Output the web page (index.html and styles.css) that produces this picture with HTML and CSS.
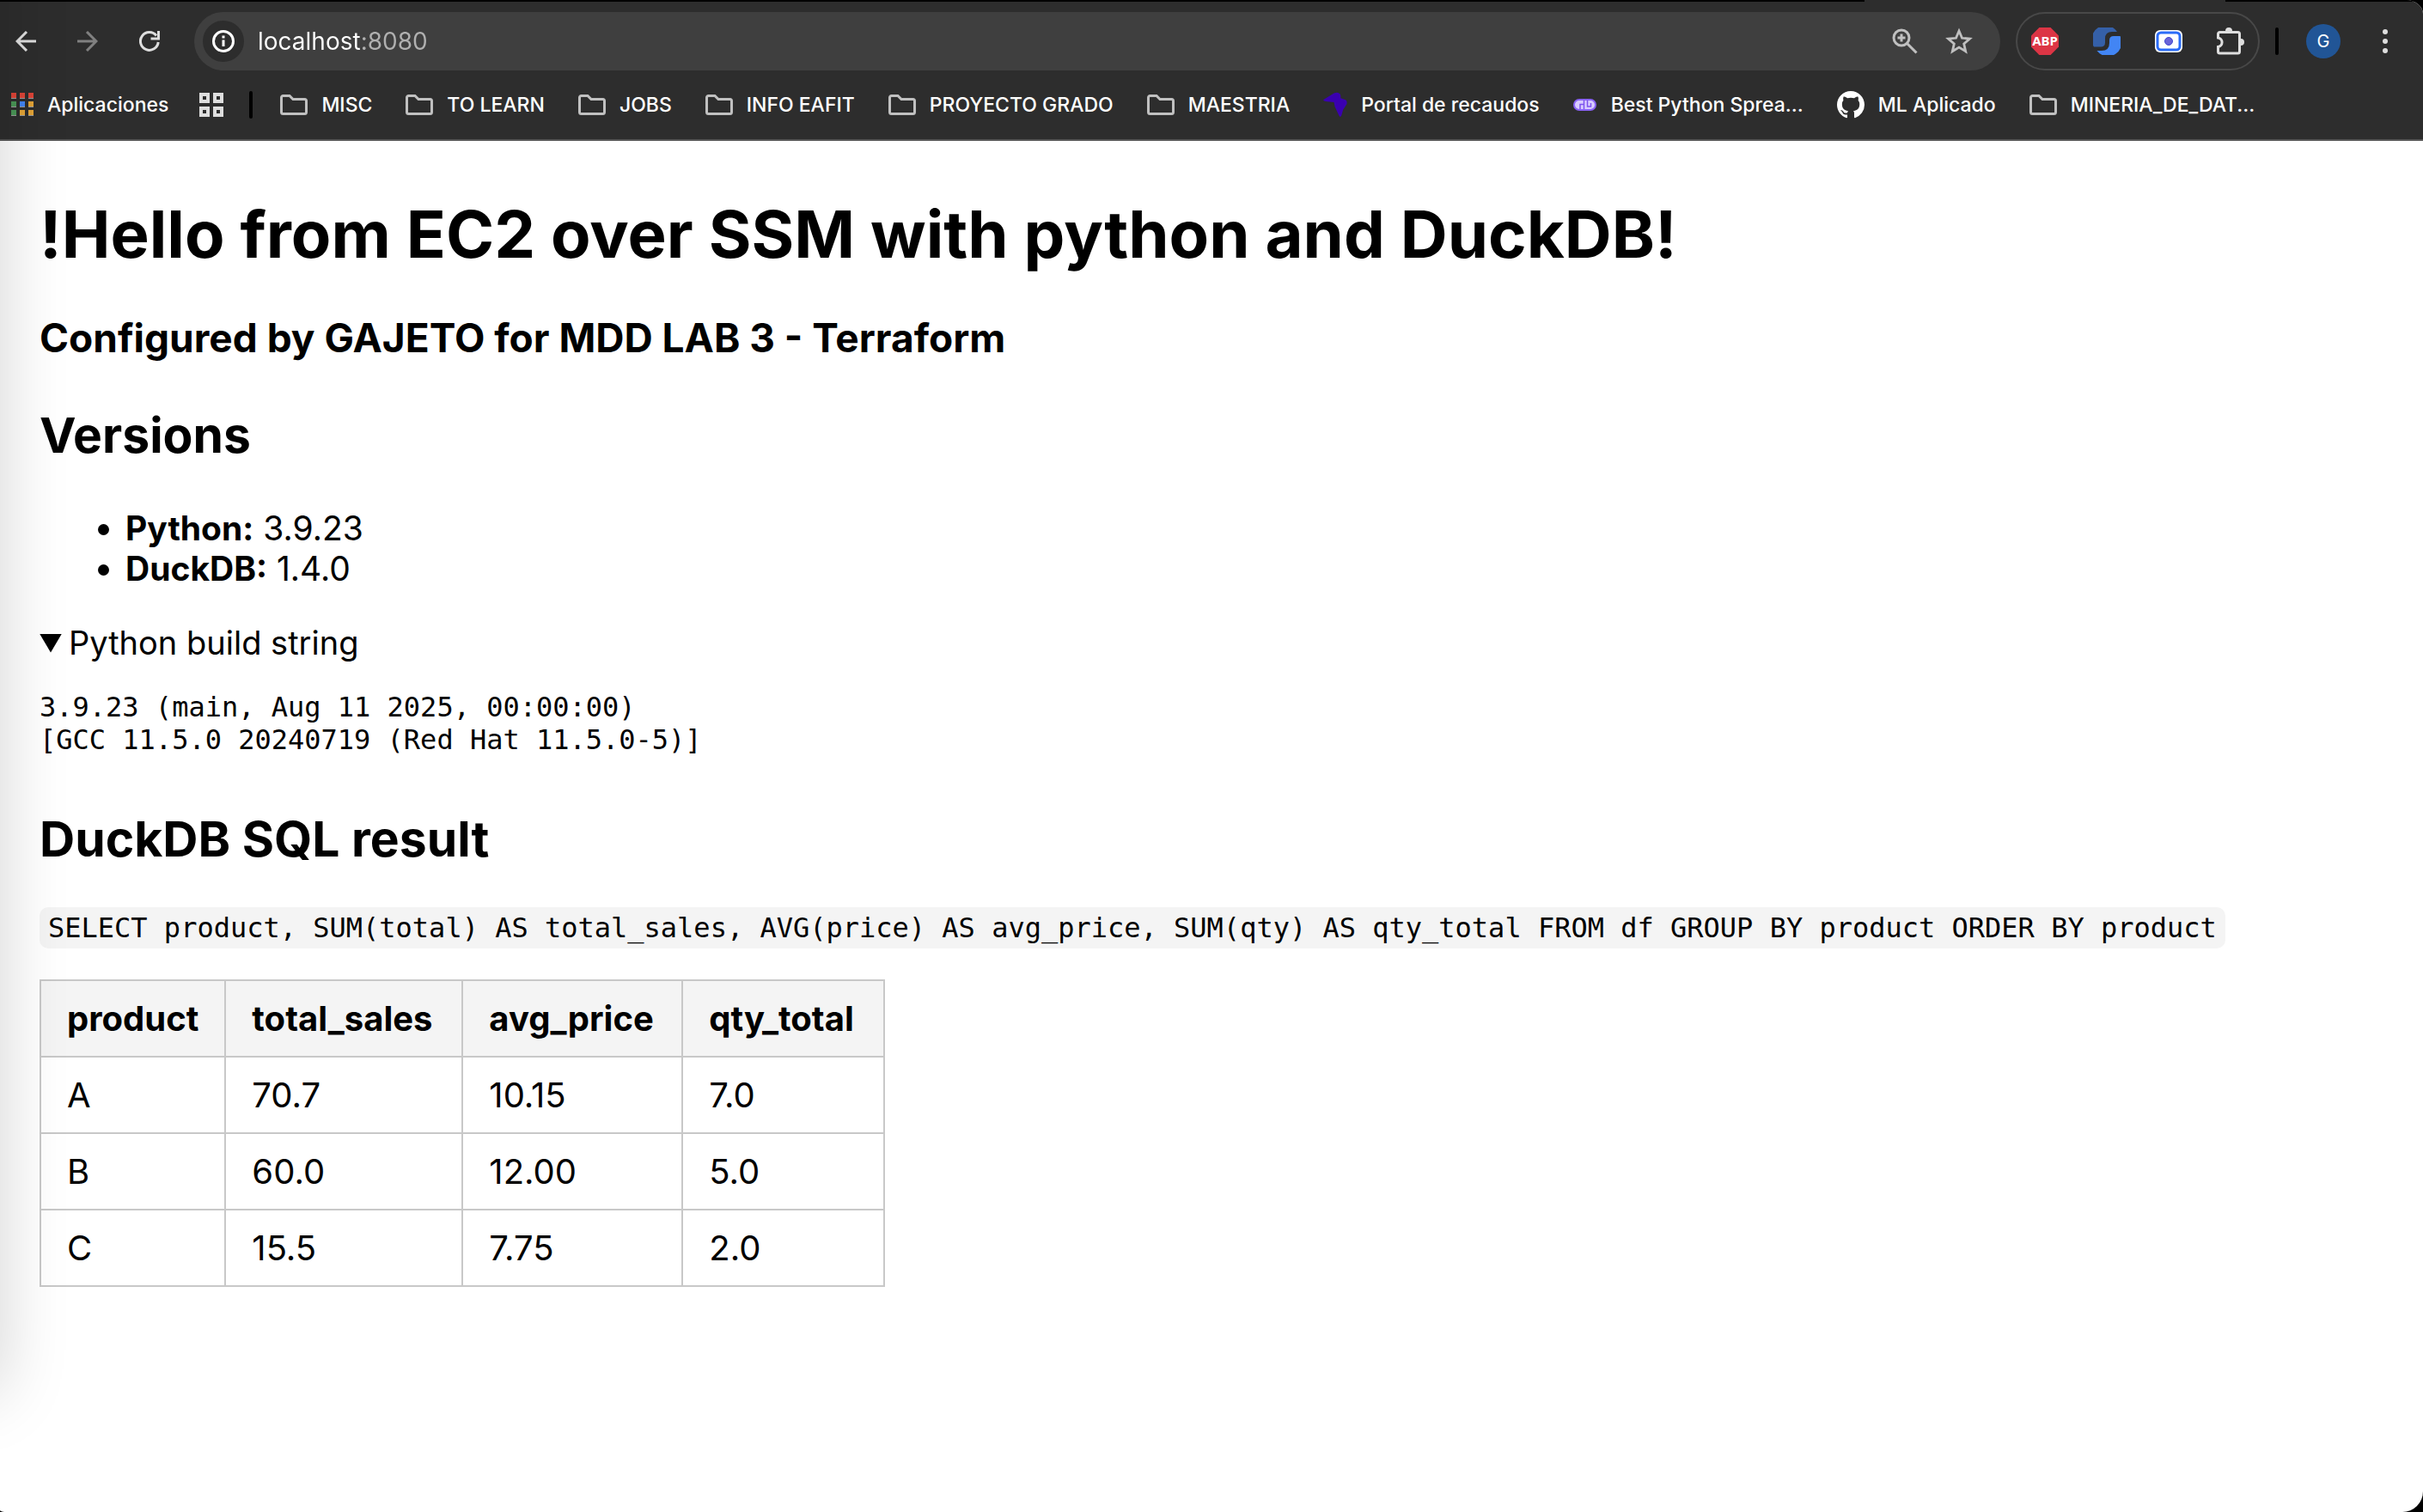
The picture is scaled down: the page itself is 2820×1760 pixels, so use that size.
FILE: index.html
```html
<!DOCTYPE html>
<html lang="en">
<head>
<meta charset="utf-8">
<title>localhost:8080</title>
<meta name="viewport" content="width=device-width, initial-scale=1">
<link rel="stylesheet" href="styles.css">
</head>
<body>
<svg width="0" height="0" class="sprite" aria-hidden="true">
  <symbol id="folder" viewBox="0 0 32 24"><path d="M3.500 1.500H11L15 5.500H28.500a2 2 0 0 1 2 2V20.500a2 2 0 0 1-2 2H3.500a2 2 0 0 1-2-2V3.500a2 2 0 0 1 2-2z" fill="none" stroke="#c0c0c0" stroke-width="3"/></symbol>
</svg>
<div class="window">
  <header class="chrome">
    <div class="tab-edge" aria-hidden="true"><span class="tab-strip"></span><span class="tab-active"></span><span class="tab-rest"></span></div>
    <div class="toolbar">
      <div class="nav">
        <button class="icon-button" aria-label="Back"><svg width="24" height="24" viewBox="0 0 24 24"><path d="M24 12H2M13 1L2 12l11 11" fill="none" stroke="#dedede" stroke-width="3"/></svg></button>
        <button class="icon-button" aria-label="Forward" disabled><svg width="24" height="24" viewBox="0 0 24 24"><path d="M0 12h22M11 1l11 11-11 11" fill="none" stroke="#808080" stroke-width="3"/></svg></button>
        <button class="icon-button" aria-label="Reload"><svg width="24" height="24" viewBox="0 0 24 24"><path d="M22.200 13A10.400 10.400 0 1 1 20 5.500" fill="none" stroke="#dedede" stroke-width="3"/><path d="M22.500 0v9H13.500" fill="none" stroke="#dedede" stroke-width="3"/></svg></button>
      </div>
      <div class="omnibox">
        <button class="site-info" aria-label="Site information"><svg width="26" height="26" viewBox="0 0 26 26"><circle cx="13" cy="13" r="11.500" fill="none" stroke="#fff" stroke-width="3"/><path d="M13 11.500v7.500M13 6.500v3" stroke="#fff" stroke-width="3"/></svg></button>
        <input class="address" type="text" aria-label="Address" value="localhost:8080">
        <button class="icon-button" aria-label="Zoom"><svg width="30" height="30" viewBox="0 0 30 30"><circle cx="11" cy="11" r="9" fill="none" stroke="#c0c0c0" stroke-width="3"/><path d="M17.500 17.500L28.500 28.500M11 6.500v9M6.500 11h9" fill="none" stroke="#c0c0c0" stroke-width="3"/></svg></button>
        <button class="icon-button" aria-label="Bookmark this page"><svg width="32" height="32" viewBox="0 0 32 32"><path d="M16 4l3.500 8.300 9 .8-6.800 5.900 2 8.800L16 23.100l-7.700 4.700 2-8.800-6.800-5.900 9-.8z" fill="none" stroke="#c0c0c0" stroke-width="2.800"/></svg></button>
      </div>
      <div class="extensions">
        <button class="icon-button" aria-label="Adblock Plus"><svg width="32" height="32" viewBox="0 0 32 32"><path d="M9.400 0h13.200L32 9.400v13.200L22.600 32H9.400L0 22.600V9.400z" fill="#dc3545"/><text x="16" y="21" text-anchor="middle" class="abp">ABP</text></svg></button>
        <button class="icon-button" aria-label="Sync extension"><svg width="32" height="32" viewBox="0 0 32 32"><path d="M28 5A16 16 0 0 0 1 22.500H9q5 0 5-5V13q0-8 8-8z" fill="#3560a8"/><path d="M31.500 10H24q-5 0-5 5v3q0 9-9 9H4.500A16 16 0 0 0 31.500 10z" fill="#4285f4"/></svg></button>
        <button class="icon-button" aria-label="Screen recorder"><svg width="32" height="32" viewBox="0 0 32 32"><rect x="0" y="3" width="32" height="26" rx="6" fill="#fff"/><rect x="3" y="6" width="26" height="20" rx="4" fill="#fff" stroke="#2b6cf8" stroke-width="3"/><circle cx="16" cy="16" r="4.500" fill="#6a63d8" stroke="#4048d0"/></svg></button>
        <button class="icon-button" aria-label="Extensions"><svg width="32" height="34" viewBox="0 0 32 34"><path d="M1.500 13V8.500a2 2 0 0 1 2-2H24.500a2 2 0 0 1 2 2V29a2 2 0 0 1-2 2H3.500a2 2 0 0 1-2-2V23.500a5.300 5.300 0 0 0 0-10.500z" fill="none" stroke="#dedede" stroke-width="3"/><path d="M10 6V5a4 4 0 0 1 8 0v1zM27 14h1a4 4 0 0 1 0 8h-1z" fill="#dedede"/></svg></button>
      </div>
      <span class="divider"></span>
      <button class="avatar" aria-label="Profile">G</button>
      <button class="icon-button menu" aria-label="Menu"><svg width="6" height="28" viewBox="0 0 6 28"><g fill="#dedede"><circle cx="3" cy="3" r="3"/><circle cx="3" cy="14" r="3"/><circle cx="3" cy="25" r="3"/></g></svg></button>
    </div>
    <nav class="bookmarks" aria-label="Bookmarks">
      <a class="bookmark" href="#"><svg width="26" height="28" viewBox="0 0 26 28"><g fill="#999"><path d="M0 2h6v5H0zM10 2h6v5h-6zM20 2h6v5h-6zM0 12h6v5H0zM10 12h6v5h-6zM20 12h6v5h-6zM0 22h6v5H0zM10 22h6v5h-6zM20 22h6v5h-6z"/></g><path d="M0 0h6v6H0zM10 0h6v6h-6zM20 0h6v6h-6z" fill="#db4437"/><path d="M0 10h6v6H0zM0 20h6v6H0z" fill="#4a9657"/><path d="M10 10h6v6h-6z" fill="#4285f4"/><path d="M20 10h6v6h-6zM10 20h6v6h-6zM20 20h6v6h-6z" fill="#e2a336"/></svg>Aplicaciones</a>
      <button class="icon-button groups" aria-label="Tab groups"><svg width="28" height="28" viewBox="0 0 28 28"><path d="M2 2h8v8H2zM18 2h8v8h-8zM2 18h8v8H2zM18 18h8v8h-8z" fill="none" stroke="#dedede" stroke-width="4"/></svg></button>
      <span class="divider"></span>
      <div class="bookmark-list">
        <button class="bookmark"><svg width="32" height="24"><use href="#folder"/></svg>MISC</button>
        <button class="bookmark"><svg width="32" height="24"><use href="#folder"/></svg>TO LEARN</button>
        <button class="bookmark"><svg width="32" height="24"><use href="#folder"/></svg>JOBS</button>
        <button class="bookmark"><svg width="32" height="24"><use href="#folder"/></svg>INFO EAFIT</button>
        <button class="bookmark"><svg width="32" height="24"><use href="#folder"/></svg>PROYECTO GRADO</button>
        <button class="bookmark"><svg width="32" height="24"><use href="#folder"/></svg>MAESTRIA</button>
        <a class="bookmark" href="#"><svg width="28" height="32" viewBox="1 0 29 32"><path d="M1 10L14 2q3-1 5-.5 3 1 3 3.500v3l6 2q2 1 1.500 5L25 22l-2 7q-1.500 3-3 0l-5-11-1-5-8-1q-4 0-5-2z" fill="#3a00b0"/></svg>Portal de recaudos</a>
        <a class="bookmark" href="#"><svg width="28" height="32" viewBox="0 0 28 32"><rect x="1" y="10" width="25" height="12" rx="6" fill="#d9ccff" stroke="#8a63f5" stroke-width="2"/><path d="M8 21v-5.500h4.500V21M12.500 11v4M16.500 11v7h4V14" fill="none" stroke="#7c52ee" stroke-width="1.500"/></svg>Best Python Sprea...</a>
        <a class="bookmark" href="#"><svg width="32" height="32" viewBox="0 0 16 16"><path fill="#fff" d="M8 0C3.580 0 0 3.580 0 8c0 3.540 2.290 6.530 5.470 7.590.4.070.55-.17.55-.38 0-.19-.01-.82-.01-1.490-2.010.37-2.530-.49-2.690-.94-.09-.23-.48-.94-.82-1.130-.28-.15-.68-.52-.01-.53.63-.01 1.080.58 1.230.82.72 1.210 1.870.87 2.330.66.07-.52.28-.87.51-1.070-1.780-.2-3.640-.89-3.640-3.950 0-.87.31-1.590.82-2.150-.08-.2-.36-1.020.08-2.120 0 0 .67-.21 2.200.82.64-.18 1.320-.27 2-.27s1.360.09 2 .27c1.530-1.040 2.200-.82 2.200-.82.44 1.100.16 1.920.08 2.120.51.56.82 1.270.82 2.150 0 3.070-1.870 3.750-3.650 3.950.29.25.54.73.54 1.480 0 1.070-.01 1.930-.01 2.200 0 .21.15.46.55.38A8.010 8.010 0 0 0 16 8c0-4.420-3.580-8-8-8z"/></svg>ML Aplicado</a>
        <button class="bookmark"><svg width="32" height="24"><use href="#folder"/></svg>MINERIA_DE_DAT...</button>
      </div>
    </nav>
  </header>
  <main class="page">
    <h1>!Hello from EC2 over SSM with python and DuckDB!</h1>
    <h3>Configured by GAJETO for MDD LAB 3 - Terraform</h3>
    <h2>Versions</h2>
    <ul>
      <li><b>Python:</b> 3.9.23</li>
      <li><b>DuckDB:</b> 1.4.0</li>
    </ul>
    <details open>
      <summary>Python build string</summary>
      <pre>3.9.23 (main, Aug 11 2025, 00:00:00)
[GCC 11.5.0 20240719 (Red Hat 11.5.0-5)]</pre>
    </details>
    <h2>DuckDB SQL result</h2>
    <p><code>SELECT product, SUM(total) AS total_sales, AVG(price) AS avg_price, SUM(qty) AS qty_total FROM df GROUP BY product ORDER BY product</code></p>
    <table>
      <colgroup><col class="col-product"><col class="col-sales"><col class="col-price"><col class="col-qty"></colgroup>
      <thead><tr><th scope="col">product</th><th scope="col">total_sales</th><th scope="col">avg_price</th><th scope="col">qty_total</th></tr></thead>
      <tbody>
        <tr><td>A</td><td>70.7</td><td>10.15</td><td>7.0</td></tr>
        <tr><td>B</td><td>60.0</td><td>12.00</td><td>5.0</td></tr>
        <tr><td>C</td><td>15.5</td><td>7.75</td><td>2.0</td></tr>
      </tbody>
    </table>
  </main>
</div>
</body>
</html>
```

FILE: styles.css
```css
* { box-sizing: border-box; }
html { background: #000; }
body {
  margin: 0;
  font-family: Inter, "Liberation Sans", sans-serif;
  color: #000;
}
.sprite { position: absolute; }
svg { display: block; flex: none; }
button, input { font: inherit; border: 0; padding: 0; margin: 0; background: none; color: inherit; }

.window {
  position: relative;
  display: flex;
  flex-direction: column;
  min-height: 100vh;
  overflow: hidden;
  background: #fff;
  border-radius: 0 20px 24px 8px / 0 16px 24px 2px;
}
/* shadow cast by the neighbouring window on the left */
.window::after {
  content: "";
  position: absolute;
  left: -80px;
  top: -80px;
  bottom: 140px;
  width: 80px;
  box-shadow: 0 0 80px rgba(0, 0, 0, .18);
  pointer-events: none;
}

.chrome { background: #2d2d2d; color: #fff; border-bottom: 2px solid #555; }
.tab-edge { display: flex; height: 2px; }
.tab-strip { flex: 2170; background: #000; }
.tab-active { flex: 420; }
.tab-rest { flex: 230; background: #000; }

.toolbar { display: flex; align-items: center; height: 92px; padding: 0 41px 0 18px; }
.icon-button { display: flex; align-items: center; justify-content: center; }
.nav { display: flex; gap: 48px; margin-right: 40px; }
.omnibox {
  display: flex;
  align-items: center;
  flex: 1;
  height: 68px;
  padding: 0 32px 0 10px;
  border-radius: 34px;
  background: #3f3f3f;
  gap: 32px;
}
.site-info {
  display: flex;
  align-items: center;
  justify-content: center;
  width: 48px;
  height: 48px;
  border-radius: 50%;
  background: #2d2d2d;
}
.address {
  flex: 1;
  min-width: 0;
  height: 48px;
  margin-left: -16px;
  font-size: 28px;
  outline: 0;
  background: linear-gradient(to right, #fff 119px, #b0b0b0 119px);
  -webkit-background-clip: text;
  background-clip: text;
  -webkit-text-fill-color: transparent;
}
.extensions {
  display: flex;
  align-items: center;
  gap: 40px;
  height: 68px;
  margin-left: 18px;
  margin-right: 18px;
  padding: 0 16px;
  border: 2px solid #484848;
  border-radius: 34px;
}
.abp { font: bold 15px "Noto Sans", sans-serif; fill: #fff; }
.divider { width: 4px; height: 32px; border-radius: 2px; background: #000; }
.avatar {
  width: 40px;
  height: 40px;
  margin-left: 32px;
  border-radius: 50%;
  background: #215596;
  font-size: 20px;
}
.menu { margin-left: 49px; }

.bookmarks {
  display: flex;
  align-items: center;
  height: 68px;
  padding: 0 13px 12px;
  font-size: 23px;
  font-weight: 500;
}
.bookmark { display: flex; align-items: center; gap: 16px; color: #fff; text-decoration: none; white-space: nowrap; line-height: 32px; }
.bookmark-list { display: flex; gap: 39px; margin-left: 32px; }
.groups { margin: 0 30px 0 36px; }

.page { flex: 1; padding: 60px 46px; font-size: 39px; line-height: 47px; }
h1, h2, h3, ul, p, pre { margin: 0; }
h1 { font-size: 76px; line-height: 96px; }
h3 { margin-top: 45px; font-size: 46px; line-height: 56px; }
h2 { margin-top: 50px; font-size: 57px; line-height: 72px; }
ul { margin-top: 48px; padding-left: 100px; }
details { margin-top: 40px; }
summary { display: flex; align-items: center; gap: 8px; list-style: none; font-size: 38px; }
summary::before { content: ""; width: 26px; height: 22px; background: #000; clip-path: polygon(0 0, 100% 0, 50% 100%); }
pre, code { font-family: "DejaVu Sans Mono", monospace; font-size: 32px; line-height: 38px; }
pre { margin-top: 32px; }
details + h2 { margin-top: 61px; }
p { margin-top: 40px; }
code { display: inline-block; padding: 5px 10px; border-radius: 10px; background: #f4f4f4; white-space: nowrap; }
table { margin-top: 36px; border-collapse: collapse; font-size: 40px; }
th, td { border: 2px solid #c8c8c8; padding: 20px 30px; text-align: left; }
th { background: #f4f4f4; }
.col-product { width: 215px; }
.col-sales { width: 276px; }
.col-price { width: 256px; }
.col-qty { width: 235px; }
```
